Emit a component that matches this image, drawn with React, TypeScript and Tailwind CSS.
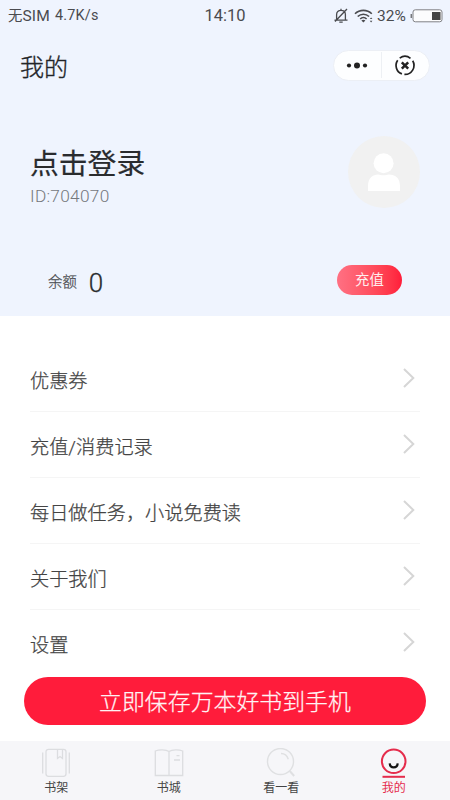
const menu = ["优惠券", "充值/消费记录", "每日做任务，小说免费读", "关于我们", "设置"];

function StatusBar() {
    return (
        <div className="h-8 flex items-center justify-between pl-2 pr-[7px] text-[#4a4b4f] relative whitespace-nowrap">
            <div className="flex items-center text-[14.4px] leading-8">
                <span className="pt-[2px]">无</span>
                <span className="text-[15.5px] tracking-[0.2px]">SIM</span>
                <span className="ml-[5px] tracking-[0.2px]">4.7K/s</span>
            </div>
            <span className="absolute left-0 right-0 text-center text-[16.5px] leading-8">14:10</span>
            <div className="flex items-center">
                <svg className="w-[16px] h-[16px] mr-[5px]" viewBox="0 0 16 16" fill="none" stroke="currentColor" strokeWidth="1.3">
                    <path d="M1.500 12.200h13M3.600 12V6.500C3.600 3.800 5.300 2.300 8 2.300s4.400 1.500 4.400 4.200V12M14 1 2 13.500M6.300 14.200h3.400M8 .8v1.500" />
                </svg>
                <svg className="w-[20px] h-[14px] mr-[3px]" viewBox="0 0 20 14" fill="none" stroke="currentColor" strokeWidth="1.6">
                    <path d="M1 4.800C5.700.2 13.100.2 17.800 4.800M3.700 7.500c3.300-3.100 8.100-3.100 11.400 0M6.200 10c1.800-1.800 4.600-1.800 6.400 0" />
                    <path d="m9.400 13.600-2-2.100c1.200-1 2.800-1 4 0z" fill="currentColor" stroke="none" />
                    <path d="m15.800 10.100 1.300-1.700 1.300 1.700zM15.800 11.700l1.300 1.700 1.300-1.700z" fill="currentColor" stroke="none" />
                </svg>
                <span className="text-[15.5px] leading-8 w-[30px]">32%</span>
                <svg className="w-[33px] h-[14px] ml-[3px] -mt-px" viewBox="0 0 33 14" fill="none">
                    <rect x="3" y=".8" width="29" height="12" rx="2.3" fill="#fcfcfd" stroke="#808185" strokeWidth="1" />
                    <path d="M1.300 5v4" stroke="#77787b" strokeWidth="1.5" />
                    <rect x="22" y="3" width="8.500" height="8" fill="#444" />
                </svg>
            </div>
        </div>
    );
}

function Header() {
    return (
        <header className="h-[68px] flex items-center justify-between pl-5 pr-5">
            <h1 className="pt-[3px] text-[24px] leading-8 font-light text-[#222428] [-webkit-text-stroke:0.35px_#222428]">我的</h1>
            <div className="w-[97px] h-[31px] -mt-[2px] rounded-full bg-[#fdfeff] border border-[#eceff5] flex items-center">
                <svg className="w-[47px] h-[29px]" viewBox="0 0 47 29" fill="#222">
                    <circle cx="15" cy="14.500" r="2.100" />
                    <circle cx="23" cy="14.500" r="3" />
                    <circle cx="31" cy="14.500" r="2.100" />
                </svg>
                <span className="w-px h-[26px] bg-[#edf0f4]" />
                <svg className="w-[46px] h-[29px]" viewBox="0 0 46 29" fill="none" stroke="#222">
                    <path d="M15.700 9.300a9 9 0 0 0 4.200 13.600M17.700 7.100a9 9 0 0 1 10.800.3M30.700 9.800a9 9 0 0 1-8.300 13.600" strokeWidth="1.700" />
                    <path d="m19.800 11.300 6.400 6.400m0-6.400-6.400 6.400" strokeWidth="2.500" />
                </svg>
            </div>
        </header>
    );
}

function Profile() {
    return (
        <div className="h-[108px] pl-[30px] pr-[30px] pt-9 flex justify-between">
            <div className="pt-[8px]">
                <div className="text-[28.8px] leading-10 text-[#292b2e] [-webkit-text-stroke:0.2px_#292b2e]">点击登录</div>
                <div className="text-[17.3px] leading-6 font-light tracking-[0.27px] text-[#75787c]">ID:704070</div>
            </div>
            <div className="w-[72px] h-[72px] rounded-full bg-[#f1f1f1]">
                <svg className="w-full h-full" viewBox="0 0 72 72" fill="#fff">
                    <circle cx="35.600" cy="27.300" r="10" />
                    <path d="M20 55v-5c0-8 5-11.500 10-11.500 3 1 8 1 11 0 6 0 11 3.500 11 11.500v5z" />
                </svg>
            </div>
        </div>
    );
}

function Balance() {
    return (
        <div className="h-[108px] pt-[57px] pl-12 pr-12 flex items-start justify-between">
            <div className="flex items-center h-[31px]">
                <span className="pt-[4px] text-[14.4px] font-light text-[#4b4d51] [-webkit-text-stroke:0.25px_#4b4d51]">余额</span>
                <span className="ml-[12px] mt-[5px] text-[26px] leading-[31px] font-light text-[#292b2e] [-webkit-text-stroke:0.3px_#292b2e]">0</span>
            </div>
            <button className="w-[65px] h-[30px] rounded-full bg-linear-to-r from-[#ff7083] to-[#ff1c3a] text-[14.4px] leading-[28px] pt-[2px] text-[#ffeef0]">充值</button>
        </div>
    );
}

function ShelfIcon() {
    return (
        <svg className="w-[30px] h-[30px]" viewBox="0 0 30 30" fill="none" stroke="#dcdde0" strokeWidth="1.3">
            <rect x="5" y="1.300" width="20" height="27" rx="2.500" />
            <path d="M1.700 4.500v21M28.300 4.500v21M16.500 1.500v9l2.500-2 2.500 2v-9" />
        </svg>
    );
}

function StoreIcon() {
    return (
        <svg className="w-[30px] h-[30px]" viewBox="0 0 30 30" fill="none" stroke="#dcdde0" strokeWidth="1.3">
            <path d="M15 3.500C12 1.500 5 1.500 1.300 3v24.500H28.700V3C25 1.500 18 1.500 15 3.500zM15 3.500v24M20 12h6M22.500 7.700h3" />
        </svg>
    );
}

function LookIcon() {
    return (
        <svg className="w-[30px] h-[30px]" viewBox="0 0 30 30" fill="none" stroke="#dfe0e2" strokeWidth="1.400">
            <circle cx="14.500" cy="13.500" r="13" />
            <path d="M15 5.500c3.700 0 6.200 2.200 7.300 5.700" />
            <path d="m23.700 23 4.500 5" strokeWidth="2" />
        </svg>
    );
}

function MineIcon() {
    return (
        <svg className="w-[30px] h-[30px]" viewBox="0 0 30 30" fill="none" stroke="#e52c4c" strokeWidth="2">
            <circle cx="14.700" cy="13.300" r="11.800" />
            <path d="M3.500 28.800H26" />
            <path d="M10.700 15.300c.4 5.300 7.600 5.300 8 0" stroke="#151515" strokeWidth="2.200" />
        </svg>
    );
}

const tabs = [
    { label: "书架", icon: ShelfIcon },
    { label: "书城", icon: StoreIcon },
    { label: "看一看", icon: LookIcon },
    { label: "我的", icon: MineIcon, active: true },
];

export default function App() {
    return (
        <div className="w-[450px] h-[800px] overflow-hidden bg-white flex flex-col font-['Roboto','Noto_Sans_CJK_SC',sans-serif]">
            <div className="h-[316px] shrink-0 bg-[#eff4fe]">
                <StatusBar />
                <Header />
                <Profile />
                <Balance />
            </div>

            <main className="flex-1 pt-[30px]">
                <ul className="px-[30px]">
                    {menu.map((label) => (
                        <li key={label} className="h-[65.9px] flex items-center justify-between border-b border-[#f5f5f5] last:h-[65px] last:border-0">
                            <span className="pt-[7px] text-[19.2px] leading-7 font-light text-[#444] [-webkit-text-stroke:0.25px_#444]">{label}</span>
                            <svg className="w-3 h-5 mr-[5px]" viewBox="0 0 12 20" fill="none" stroke="#d6d6d6" strokeWidth="2">
                                <path d="m1 1 9.300 9L1 19" />
                            </svg>
                        </li>
                    ))}
                </ul>
                <button className="block w-[402px] h-12 mx-auto mt-[2px] pt-[4px] rounded-full bg-[#ff1c3b] text-[22.9px] leading-[44px] font-light text-[#fff3f4] [-webkit-text-stroke:0.25px_#fff3f4]">
                    立即保存万本好书到手机
                </button>
            </main>

            <nav className="h-[59px] shrink-0 bg-[#f6f6f9] flex">
                {tabs.map(({ label, icon: Icon, active }) => (
                    <div key={label} className="flex-1 flex flex-col items-center pt-[7px]">
                        <Icon />
                        <span className={active ? "mt-px text-[12px] leading-[18px] text-[#e52c4c]" : "mt-px text-[12px] leading-[18px] text-[#444]"}>{label}</span>
                    </div>
                ))}
            </nav>
        </div>
    );
}
